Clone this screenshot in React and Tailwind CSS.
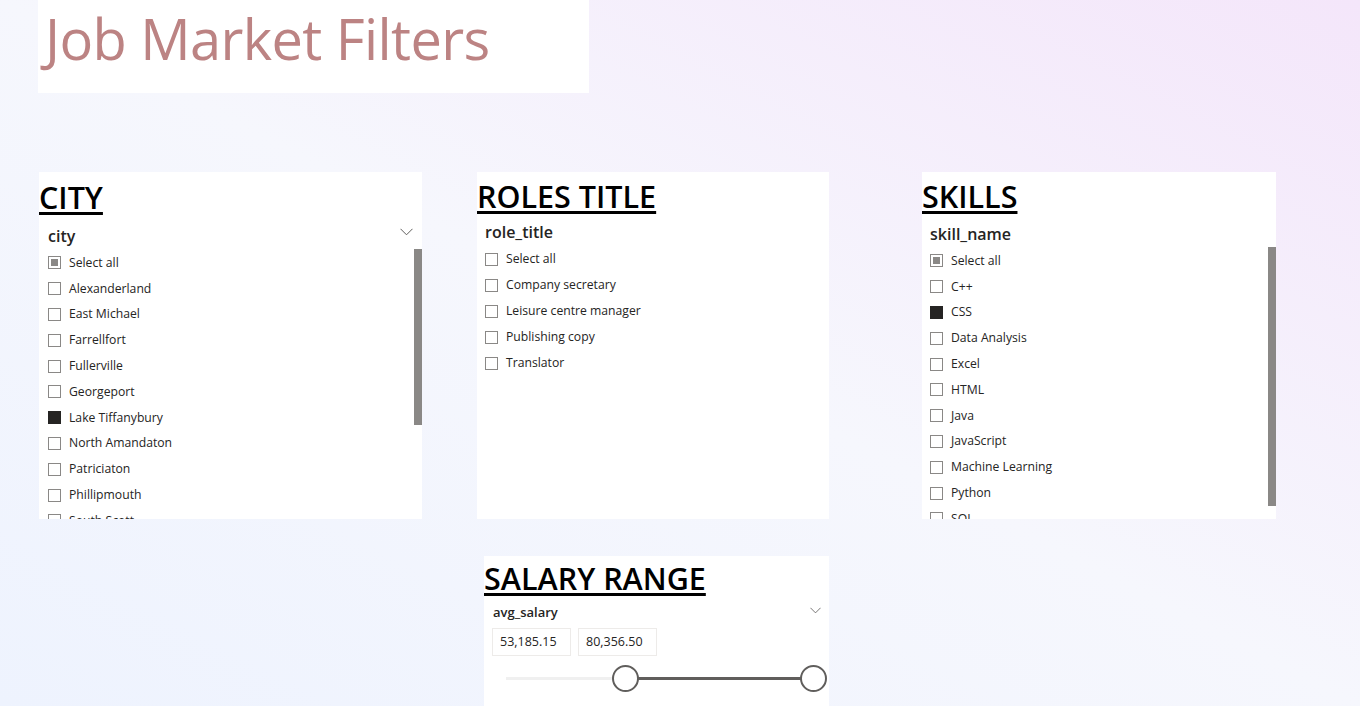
import React from "react";

const font = { fontFamily: '"Segoe UI", "Open Sans", "Noto Sans", sans-serif' };

function Box({ state }) {
  if (state === "checked")
    return <span className="block w-[13px] h-[13px] bg-[#252423] shrink-0" />;
  if (state === "partial")
    return (
      <span className="flex w-[13px] h-[13px] border border-[#8a8886] items-center justify-center shrink-0">
        <span className="block w-[7px] h-[7px] bg-[#8a8886]" />
      </span>
    );
  return <span className="block w-[13px] h-[13px] border border-[#8a8886] shrink-0" />;
}

function Chevron({ className }) {
  return (
    <svg className={className} width="13" height="8" viewBox="0 0 13 8" fill="none">
      <path d="M0.5 0.8 L6.5 6.8 L12.5 0.8" stroke="#605e5c" strokeWidth="1" />
    </svg>
  );
}

function List({ items, step }) {
  return (
    <div className="flex flex-col">
      {items.map(([label, st]) => (
        <div key={label} className={`flex items-center gap-[8px] ${step}`}>
          <Box state={st} />
          <span className="text-[12.2px] text-[#252423] leading-none whitespace-nowrap">{label}</span>
        </div>
      ))}
    </div>
  );
}

export default function App() {
  const cities = [
    ["Select all", "partial"],
    ["Alexanderland"],
    ["East Michael"],
    ["Farrellfort"],
    ["Fullerville"],
    ["Georgeport"],
    ["Lake Tiffanybury", "checked"],
    ["North Amandaton"],
    ["Patriciaton"],
    ["Phillipmouth"],
    ["South Scott"],
  ];
  const roles = [
    ["Select all"],
    ["Company secretary"],
    ["Leisure centre manager"],
    ["Publishing copy"],
    ["Translator"],
  ];
  const skills = [
    ["Select all", "partial"],
    ["C++"],
    ["CSS", "checked"],
    ["Data Analysis"],
    ["Excel"],
    ["HTML"],
    ["Java"],
    ["JavaScript"],
    ["Machine Learning"],
    ["Python"],
    ["SQL"],
  ];

  const head =
    "text-[30.5px] font-semibold leading-[32px] text-black underline decoration-[3px] underline-offset-[3px] whitespace-nowrap";

  return (
    <div
      style={font}
      className="w-[1360px] h-[706px] overflow-hidden bg-gradient-to-tr from-[#eef3fe] via-[#f6f7fd] to-[#f4e6fa] flex flex-col"
    >
      {/* Title */}
      <div className="ml-[38px] w-[551px] h-[93px] bg-white shrink-0">
        <div className="pl-[7px] pt-[6px] text-[56px] font-normal leading-[64px] text-[#bc8383] tracking-[-0.6px]">
          Job Market Filters
        </div>
      </div>

      {/* Top row */}
      <div className="flex items-start mt-[79px] shrink-0">
        {/* City */}
        <div className="ml-[39px] w-[383px] h-[347px] bg-white relative overflow-hidden">
          <div className={`${head} pt-[9px]`}>CITY</div>
          <div className="flex items-center justify-between pl-[9px] pr-[9px] mt-[15px]">
            <span className="text-[16px] font-semibold text-[#252423] leading-none">city</span>
            <Chevron className="-mt-[8px]" />
          </div>
          <div className="pl-[9px] mt-[6px]">
            <List items={cities} step="h-[25.8px]" />
          </div>
          <div className="absolute right-0 top-[77px] w-[8px] h-[176px] bg-[#8a8886]" />
        </div>

        {/* Roles */}
        <div className="ml-[55px] w-[352px] h-[347px] bg-white">
          <div className={`${head} pt-[8px]`}>ROLES TITLE</div>
          <div className="pl-[8px] mt-[8px]">
            <span className="text-[16px] font-semibold text-[#252423] leading-none">role_title</span>
          </div>
          <div className="pl-[8px] mt-[2px]">
            <List items={roles} step="h-[26px]" />
          </div>
        </div>

        {/* Skills */}
        <div className="ml-[93px] w-[354px] h-[347px] bg-white relative overflow-hidden">
          <div className={`${head} pt-[8px]`}>SKILLS</div>
          <div className="pl-[8px] mt-[10px]">
            <span className="text-[16px] font-semibold text-[#252423] leading-none">skill_name</span>
          </div>
          <div className="pl-[8px] mt-[2px]">
            <List items={skills} step="h-[25.8px]" />
          </div>
          <div className="absolute right-0 top-[75px] w-[8px] h-[259px] bg-[#8a8886]" />
        </div>
      </div>

      {/* Salary */}
      <div className="ml-[484px] mt-[37px] w-[345px] h-[160px] bg-white shrink-0">
        <div className={`${head} pt-[6px]`}>SALARY RANGE</div>
        <div className="flex items-center justify-between pl-[9px] pr-[8px] mt-[12px]">
          <span className="text-[13px] font-semibold text-[#252423] leading-none">avg_salary</span>
          <Chevron className="-mt-[4px] w-[11px] h-[7px]" />
        </div>
        <div className="flex gap-[7px] pl-[8px] mt-[9px]">
          <div className="w-[79px] h-[28px] border border-[#edebe9] flex items-center pl-[7px] text-[12.5px] text-[#252423]">
            53,185.15
          </div>
          <div className="w-[79px] h-[28px] border border-[#edebe9] flex items-center pl-[7px] text-[12.5px] text-[#252423]">
            80,356.50
          </div>
        </div>
        <div className="relative h-[30px] mt-[7px]">
          <div className="absolute left-[22px] top-[14px] w-[120px] h-[3px] bg-[#f0f0f0]" />
          <div className="absolute left-[142px] top-[14px] w-[187px] h-[3px] bg-[#605e5c]" />
          <div className="absolute left-[128px] top-[2px] w-[27px] h-[27px] rounded-full border-2 border-[#605e5c] bg-white" />
          <div className="absolute left-[316px] top-[2px] w-[27px] h-[27px] rounded-full border-2 border-[#605e5c] bg-white" />
        </div>
      </div>
    </div>
  );
}
